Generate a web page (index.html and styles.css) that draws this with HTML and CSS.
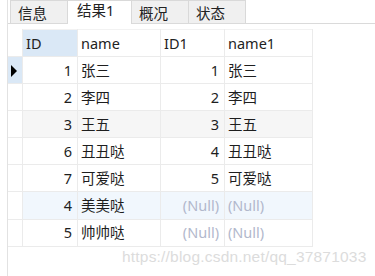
FILE: index.html
```html
<!DOCTYPE html>
<html lang="zh-CN">
<head>
    <meta charset="UTF-8">
    <title>结果1</title>
    <link rel="stylesheet" href="styles.css">
</head>
<body>
    <div class="pane">
        <ul class="tabs">
            <li class="tab">信息</li>
            <li class="tab active">结果1</li>
            <li class="tab">概况</li>
            <li class="tab">状态</li>
        </ul>
        <table class="grid">
            <tr class="head">
                <td class="mark"></td>
                <td class="c-id focus">ID</td>
                <td class="c-name">name</td>
                <td class="c-id1">ID1</td>
                <td class="c-name1">name1</td>
            </tr>
            <tr>
                <td class="mark cur"><span class="arrow"></span></td>
                <td class="num">1</td><td>张三</td><td class="num">1</td><td>张三</td>
            </tr>
            <tr>
                <td class="mark"></td>
                <td class="num">2</td><td>李四</td><td class="num">2</td><td>李四</td>
            </tr>
            <tr class="grey">
                <td class="mark"></td>
                <td class="num">3</td><td>王五</td><td class="num">3</td><td>王五</td>
            </tr>
            <tr>
                <td class="mark"></td>
                <td class="num">6</td><td>丑丑哒</td><td class="num">4</td><td>丑丑哒</td>
            </tr>
            <tr>
                <td class="mark"></td>
                <td class="num">7</td><td>可爱哒</td><td class="num">5</td><td>可爱哒</td>
            </tr>
            <tr class="blue">
                <td class="mark"></td>
                <td class="num">4</td><td>美美哒</td><td class="num null">(Null)</td><td class="null">(Null)</td>
            </tr>
            <tr>
                <td class="mark"></td>
                <td class="num">5</td><td>帅帅哒</td><td class="num null">(Null)</td><td class="null">(Null)</td>
            </tr>
        </table>
        <div class="mark-url">https://blog.csdn.net/qq_37871033</div>
    </div>
</body>
</html>
```

FILE: styles.css
```css
*{
    margin: 0;
    padding: 0;
    list-style: none;
}
body{
    width: 375px;
    height: 276px;
    overflow: hidden;
    background-color: #fff;
    font-family: "Noto Sans", "Noto Sans CJK SC", sans-serif;
    font-size: 14.5px;
    color: #1e1e1e;
}
.pane{
    position: relative;
    height: 276px;
    margin-left: 7px;
    border-left: 1px solid #e2e2e2;
}
.tabs{
    display: flex;
    height: 23px;
    padding-left: 2px;
    border-bottom: 1px solid #dadada;
}
.tab{
    width: 57px;
    height: 23px;
    padding-left: 7px;
    box-sizing: border-box;
    line-height: 24px;
    background-color: #f0f0f0;
    border: 1px solid #d9d9d9;
    border-bottom: none;
    border-left: none;
    color: #222;
}
.tab:first-child{
    border-left: 1px solid #d9d9d9;
    width: 58px;
}
.tab.active{
    width: 64px;
    height: 24px;
    padding-left: 9px;
    line-height: 18px;
    background-color: #fff;
}
.grid{
    margin-top: 5px;
    border-collapse: collapse;
    table-layout: fixed;
}
.grid td{
    height: 26.1px;
    padding: 0 3px;
    border: 1px solid #ebebeb;
    white-space: nowrap;
    overflow: hidden;
    line-height: 25px;
}
.grid .head td{
    height: 26px;
}
.grid td.mark{
    width: 14px;
    padding: 0;
    border-left: none;
    background-color: #fff;
}
.head td.mark{
    border-top: none;
}
.c-id{ width: 48px; }
.c-name{ width: 76px; }
.c-id1{ width: 57px; }
.c-name1{ width: 81px; }
.focus{
    background-color: #dae8f6;
}
.head td{
    border-top-color: #f2f2f2;
    color: #222;
}
.grid td.num{
    text-align: right;
    padding-right: 5px;
}
.grid td.mark.cur{
    background-color: #dae8f6;
    position: relative;
}
.arrow{
    position: absolute;
    left: 3px;
    top: 8px;
    width: 0;
    height: 0;
    border-top: 6px solid transparent;
    border-bottom: 6px solid transparent;
    border-left: 6px solid #000;
}
.grey td{
    background-color: #f6f6f6;
}
.blue td{
    background-color: #f1f7fd;
}
.grid td.null{
    color: #b2b8cc;
}
.mark-url{
    position: absolute;
    left: 114px;
    top: 248px;
    font-family: "Liberation Sans", Arial, sans-serif;
    font-size: 15.5px;
    color: #dcdcdc;
    letter-spacing: 0.2px;
}
```
